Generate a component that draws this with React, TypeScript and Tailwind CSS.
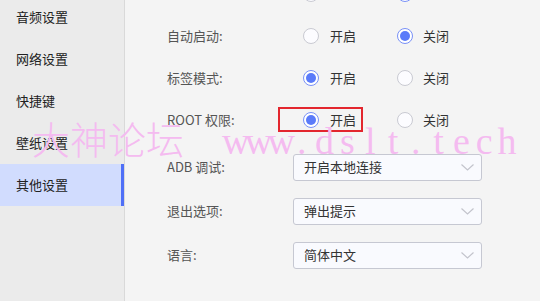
import React from 'react';

const menu = ['音频设置', '网络设置', '快捷键', '壁纸设置', '其他设置'];

function Radio({ checked }: { checked: boolean }) {
  return checked ? (
    <span className="w-4 h-4 rounded-full border border-[#7890f7] bg-white flex items-center justify-center shrink-0">
      <span className="w-[10px] h-[10px] rounded-full bg-[#5b7bf9]" />
    </span>
  ) : (
    <span className="w-4 h-4 rounded-full border border-[#c9cad2] bg-[#fcfcff] shrink-0" />
  );
}

function RadioRow({ label, on, boxed, bare }: { label: string; on: boolean; boxed?: boolean; bare?: boolean }) {
  return (
    <div className="h-[42px] flex items-center">
      <div className="w-[126px] text-[#555]">{label}</div>
      <div className="relative">
        {boxed && (
          <span className="absolute left-[-15px] top-[-5px] w-[85px] h-[25px] border-2 border-[#e3262e]" />
        )}
        <div className="flex items-center h-[16px]">
          <div className="w-[104px] flex items-center gap-[11px] pl-[10px] text-[#333]">
            <Radio checked={on} />
            {!bare && <span>开启</span>}
          </div>
          <div className="flex items-center gap-[10px] text-[#333]">
            <Radio checked={!on} />
            {!bare && <span>关闭</span>}
          </div>
        </div>
      </div>
    </div>
  );
}

function SelectRow({ label, value }: { label: string; value: string }) {
  return (
    <div className="h-[44px] flex items-center">
      <div className="w-[126px] text-[#555]">{label}</div>
      <div className="w-[189px] h-[27px] border border-[#c6c8d2] rounded-[3px] bg-[#f9fafe] flex items-center justify-between pl-[10px] pr-[7px] text-[#333]">
        <span>{value}</span>
        <svg width="13" height="7" viewBox="0 0 13 7" fill="none">
          <path d="M0.5 0.5 L6.5 6 L12.5 0.5" stroke="#c3c4cc" strokeWidth="1.2" />
        </svg>
      </div>
    </div>
  );
}

const site = 'www.dslt.tech'.split('');

export default function App() {
  return (
    <div
      className="w-[540px] h-[301px] overflow-hidden relative flex bg-[#f4f4f4] text-[13px]"
      style={{ fontFamily: '"Noto Sans CJK SC", "Noto Sans", sans-serif' }}
    >
      {/* sidebar */}
      <div className="w-[125px] shrink-0 bg-[#ebebeb] border-r border-[#d9d9d9]">
        <div className="-mt-[4px] flex flex-col">
          {menu.map((m, i) => (
            <div
              key={m}
              className={
                i === 4
                  ? 'h-[42px] flex items-center pl-4 text-[#222] bg-[#d1dcfe] border-r-[3px] border-[#4f6ff7]'
                  : 'h-[42px] flex items-center pl-4 text-[#222]'
              }
            >
              {m}
            </div>
          ))}
        </div>
      </div>

      {/* content */}
      <div className="flex-1 pl-[42px]">
        <div className="-mt-[27px]">
          <RadioRow label="" on={false} bare />
          <RadioRow label="自动启动:" on={false} />
          <RadioRow label="标签模式:" on={true} />
          <RadioRow label="ROOT 权限:" on={true} boxed />
        </div>
        <div className="mt-[4px]">
          <SelectRow label="ADB 调试:" value="开启本地连接" />
          <SelectRow label="退出选项:" value="弹出提示" />
          <SelectRow label="语言:" value="简体中文" />
        </div>
      </div>

      {/* watermark */}
      <div className="absolute left-[32px] top-[119px] flex items-baseline leading-[38px] text-[38px] text-[#f4bbf0] pointer-events-none">
        <span style={{ fontFamily: '"Noto Sans CJK SC", serif' }} className="font-light">大神论坛</span>
        <span className="ml-[38px] flex items-baseline" style={{ fontFamily: '"Liberation Serif", serif' }}>
          {site.map((c, i) => (
            <span key={i} className="w-[22.8px] text-center inline-block">{c}</span>
          ))}
        </span>
      </div>
    </div>
  );
}
